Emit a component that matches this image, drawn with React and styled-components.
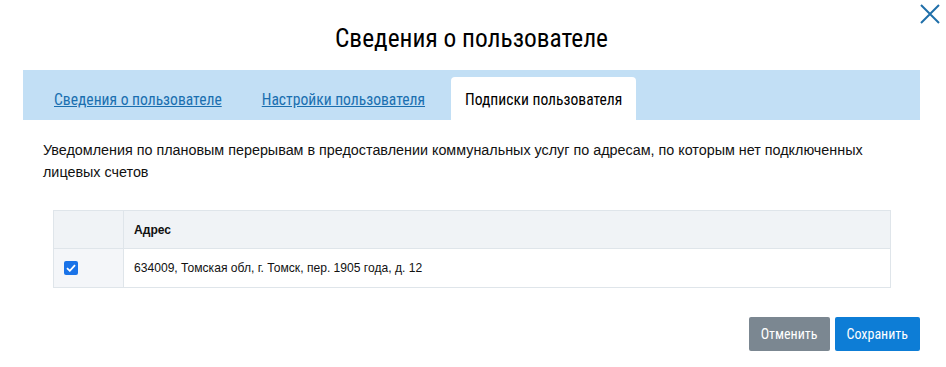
import React, { useState } from "react";
import styled, { createGlobalStyle } from "styled-components";

const GlobalStyle = createGlobalStyle`
  html, body {
    margin: 0;
    padding: 0;
    background: #ffffff;
  }
  body {
    font-family: "Liberation Sans", Arial, sans-serif;
    color: #1a1a1a;
  }
`;

const narrow = `"Roboto Condensed", "Liberation Sans Narrow", "DejaVu Sans Condensed", "Liberation Sans", sans-serif`;

function App() {
  const [checked, setChecked] = useState(true);

  return (
    <>
      <GlobalStyle />
      <Modal>
        <CloseButton aria-label="Закрыть">
          <svg width="20" height="20" viewBox="0 0 20 20">
            <path d="M1 1 L19 19 M19 1 L1 19" stroke="#1f6fa9" strokeWidth="2" fill="none" />
          </svg>
        </CloseButton>

        <Title>Сведения о пользователе</Title>

        <TabBar>
          <Tab>Сведения о пользователе</Tab>
          <Tab>Настройки пользователя</Tab>
          <Tab active>Подписки пользователя</Tab>
        </TabBar>

        <Description>
          Уведомления по плановым перерывам в предоставлении коммунальных услуг по адресам, по которым нет подключенных
          лицевых счетов
        </Description>

        <Table>
          <thead>
            <tr>
              <HeadCell narrow />
              <HeadCell>Адрес</HeadCell>
            </tr>
          </thead>
          <tbody>
            <tr>
              <BodyCell narrow>
                <Check checked={checked} onClick={() => setChecked(!checked)}>
                  {checked && (
                    <svg width="10" height="8" viewBox="0 0 10 8">
                      <path d="M1 4.2 L3.8 6.8 L9 1.2" stroke="#fff" strokeWidth="1.8" fill="none" />
                    </svg>
                  )}
                </Check>
              </BodyCell>
              <BodyCell>634009, Томская обл, г. Томск, пер. 1905 года, д. 12</BodyCell>
            </tr>
          </tbody>
        </Table>

        <Footer>
          <Button variant="cancel">Отменить</Button>
          <Button>Сохранить</Button>
        </Footer>
      </Modal>
    </>
  );
}

export default App;

const Modal = styled.div`
  position: relative;
  width: 946px;
  height: 367px;
  box-sizing: border-box;
  padding: 0 26px 0 23px;
  background: #fff;
  overflow: hidden;
`;

const CloseButton = styled.button`
  position: absolute;
  top: 4px;
  right: 6px;
  padding: 0;
  border: 0;
  background: none;
  cursor: pointer;
  line-height: 0;
`;

const Title = styled.h1`
  margin: 0;
  padding-top: 22px;
  height: 70px;
  box-sizing: border-box;
  text-align: center;
  font-family: ${narrow};
  font-weight: 400;
  font-size: 25.4px;
  line-height: 32px;
  color: #000;
`;

const TabBar = styled.div`
  display: flex;
  align-items: flex-end;
  gap: 12px;
  height: 50px;
  padding: 0 0 0 17px;
  background: #c2dff5;
`;

const Tab = styled.div`
  height: 43px;
  padding: 2px 14px 0;
  border-radius: 4px 4px 0 0;
  display: flex;
  align-items: center;
  box-sizing: border-box;
  font-family: ${narrow};
  font-size: 15.6px;
  color: ${(p) => (p.active ? "#000" : "#1a6fb0")};
  text-decoration: ${(p) => (p.active ? "none" : "underline")};
  background: ${(p) => (p.active ? "#fff" : "transparent")};
  cursor: pointer;
`;

const Description = styled.p`
  margin: 0;
  padding: 19px 20px 0 20px;
  font-family: "Liberation Sans", Arial, sans-serif;
  font-size: 14.35px;
  line-height: 22px;
  color: #111;
`;

const Table = styled.table`
  margin: 27px 0 0 30px;
  width: 838px;
  border-collapse: collapse;
  font-family: "Liberation Sans", Arial, sans-serif;
  font-size: 12.1px;
  color: #111;
`;

const HeadCell = styled.th`
  height: 38px;
  width: ${(p) => (p.narrow ? "70px" : "auto")};
  padding: 0 10px;
  box-sizing: border-box;
  text-align: left;
  font-weight: 700;
  background: #f0f3f6;
  border: 1px solid #dfe5ea;
`;

const BodyCell = styled.td`
  height: 39px;
  width: ${(p) => (p.narrow ? "70px" : "auto")};
  padding: ${(p) => (p.narrow ? "0 0 0 10px" : "0 10px")};
  box-sizing: border-box;
  background: ${(p) => (p.narrow ? "#f4f6f9" : "#fff")};
  border: 1px solid #dfe5ea;
`;

const Check = styled.span`
  display: inline-flex;
  align-items: center;
  justify-content: center;
  width: 14px;
  height: 14px;
  border-radius: 2px;
  vertical-align: middle;
  background: ${(p) => (p.checked ? "#1a73e8" : "#fff")};
  border: ${(p) => (p.checked ? "none" : "1px solid #8a96a0")};
  cursor: pointer;
`;

const Footer = styled.div`
  display: flex;
  justify-content: flex-end;
  gap: 5px;
  margin-top: 29px;
`;

const Button = styled.button`
  height: 34px;
  padding: 0 12px;
  border: 0;
  border-radius: 2px;
  font-family: ${narrow};
  font-size: 14px;
  color: #fff;
  background: ${(p) => (p.variant === "cancel" ? "#7b8791" : "#0d7dd6")};
  cursor: pointer;
`;
